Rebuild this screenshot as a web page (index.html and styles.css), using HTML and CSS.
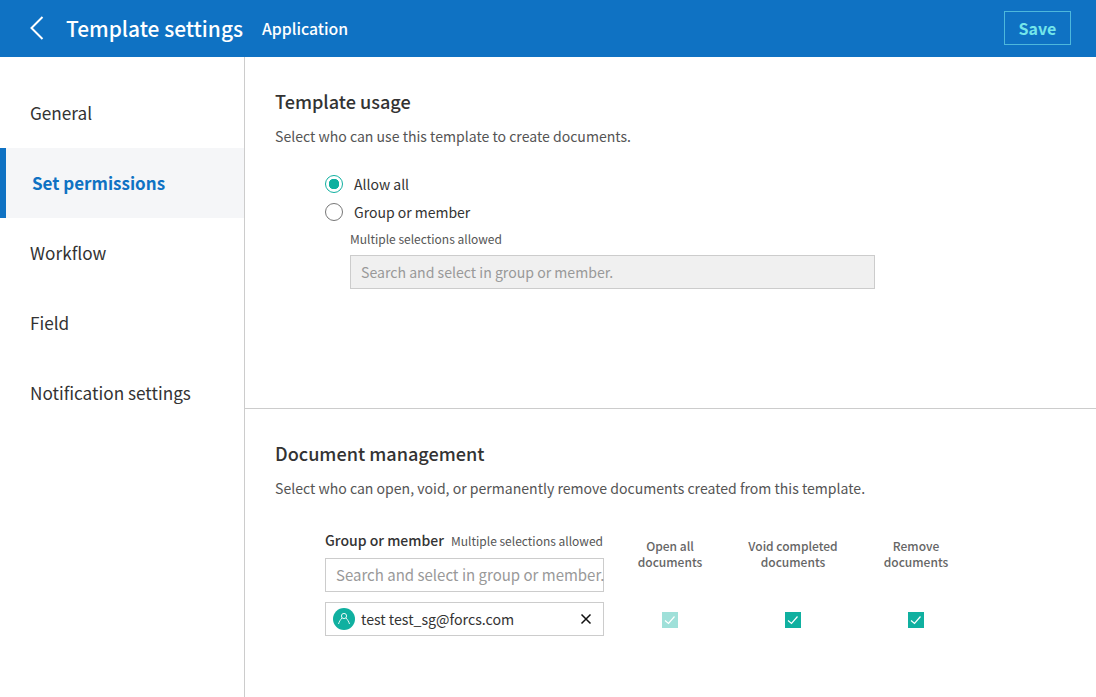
FILE: index.html
```html
<!DOCTYPE html>
<html lang="en">
<head>
    <meta charset="UTF-8">
    <meta name="viewport" content="width=device-width, initial-scale=1.0">
    <title>Template settings</title>
    <link rel="stylesheet" href="styles.css">
</head>
<body>
    <header class="topbar">
        <svg class="back" width="16" height="24" viewBox="0 0 16 24"><path d="M13.5 1 L2.5 12 L13.5 23" fill="none" stroke="#fff" stroke-width="2"/></svg>
        <span class="page-title">Template settings</span>
        <span class="page-sub">Application</span>
        <button class="save">Save</button>
    </header>

    <div class="layout">
        <nav class="sidebar">
            <a class="menu-item">General</a>
            <a class="menu-item active">Set permissions</a>
            <a class="menu-item">Workflow</a>
            <a class="menu-item">Field</a>
            <a class="menu-item">Notification settings</a>
        </nav>

        <main class="content">
            <section class="usage">
                <h2>Template usage</h2>
                <p class="desc">Select who can use this template to create documents.</p>

                <div class="radios">
                    <label class="radio-row"><span class="radio checked"></span>Allow all</label>
                    <label class="radio-row"><span class="radio"></span>Group or member</label>
                    <div class="radio-detail">
                        <small class="hint">Multiple selections allowed</small>
                        <div class="field disabled">Search and select in group or member.</div>
                    </div>
                </div>
            </section>

            <section class="management">
                <h2>Document management</h2>
                <p class="desc">Select who can open, void, or permanently remove documents created from this template.</p>

                <div class="perm-table">
                    <div class="perm-head">
                        <div class="perm-label"><b>Group or member</b><small class="hint">Multiple selections allowed</small></div>
                        <div class="field search">Search and select in group or member.</div>
                    </div>
                    <div class="perm-col">Open all<br>documents</div>
                    <div class="perm-col">Void completed<br>documents</div>
                    <div class="perm-col">Remove<br>documents</div>

                    <div class="member">
                        <span class="avatar">
                            <svg width="14" height="14" viewBox="0 0 14 14"><circle cx="7" cy="4" r="2.6" fill="none" stroke="#fff" stroke-width="0.9"/><path d="M1.5 12 C2.2 9.5 3.6 7.6 5 6 M12.5 12 C11.8 9.5 10.4 7.6 9 6" fill="none" stroke="#fff" stroke-width="0.9"/></svg>
                        </span>
                        <span class="member-name">test test_sg@forcs.com</span>
                        <svg class="remove" width="12" height="12" viewBox="0 0 12 12"><path d="M1.5 1.5 L10.5 10.5 M10.5 1.5 L1.5 10.5" stroke="#111" stroke-width="1.5"/></svg>
                    </div>
                    <div class="perm-check"><span class="check faded"><svg width="16" height="16" viewBox="0 0 16 16"><path d="M3 8.5 L6.5 11.5 L12.5 4.5" fill="none" stroke="#fff" stroke-width="1.2"/></svg></span></div>
                    <div class="perm-check"><span class="check"><svg width="16" height="16" viewBox="0 0 16 16"><path d="M3 8.5 L6.5 11.5 L12.5 4.5" fill="none" stroke="#fff" stroke-width="1.2"/></svg></span></div>
                    <div class="perm-check"><span class="check"><svg width="16" height="16" viewBox="0 0 16 16"><path d="M3 8.5 L6.5 11.5 L12.5 4.5" fill="none" stroke="#fff" stroke-width="1.2"/></svg></span></div>
                </div>
            </section>
        </main>
    </div>
</body>
</html>
```

FILE: styles.css
```css
* {
    box-sizing: border-box;
}

body {
    font-family: "Noto Sans CJK KR", "Noto Sans", sans-serif;
    margin: 0;
    color: #333;
    background-color: #fff;
    height: 697px;
    overflow: hidden;
}

/* Top bar */
.topbar {
    display: flex;
    align-items: center;
    height: 57px;
    padding: 0 25px 1px 29px;
    background-color: #0f72c3;
    color: #fff;
}

.back {
    margin-right: 21px;
}

.page-title {
    font-size: 20.9px;
    font-weight: 500;
    margin-right: 19px;
}

.page-sub {
    font-size: 15.8px;
    font-weight: 500;
}

.save {
    margin-left: auto;
    width: 67px;
    height: 34px;
    padding: 0;
    background: transparent;
    border: 1px solid #4db8dc;
    color: #74e6ea;
    font-family: inherit;
    font-size: 16px;
    font-weight: 700;
}

/* Sidebar */
.layout {
    display: flex;
    height: 640px;
}

.sidebar {
    width: 245px;
    padding-top: 21px;
    border-right: 1px solid #ccc;
}

.menu-item {
    display: flex;
    align-items: center;
    height: 70px;
    padding-left: 30px;
    padding-bottom: 2px;
    font-size: 17.2px;
    color: #333;
}

.menu-item.active {
    padding-left: 26px;
    border-left: 6px solid #0f72c3;
    background-color: #f5f6f8;
    color: #0f72c3;
    font-size: 17px;
    font-weight: 700;
}

/* Content */
.content {
    flex: 1;
}

.usage {
    height: 352px;
    padding: 31px 30px 0;
    border-bottom: 1px solid #ccc;
}

.management {
    padding: 31px 30px 0;
}

h2 {
    margin: 0;
    font-size: 18.1px;
    font-weight: 500;
    line-height: 26px;
    color: #333;
}

.desc {
    margin: 11px 0 0;
    font-size: 14.07px;
    line-height: 22px;
    color: #555;
}

.radios {
    margin: 23px 0 0 50px;
}

.radio-row {
    display: flex;
    align-items: center;
    height: 28px;
    font-size: 14px;
    color: #333;
}

.radio {
    width: 18px;
    height: 18px;
    margin-right: 11px;
    border: 1px solid #777;
    border-radius: 50%;
    background-color: #fff;
}

.radio.checked {
    border: 1.5px solid #10b0a0;
    background: radial-gradient(circle, #10b0a0 0, #10b0a0 5px, #fff 5.5px);
}

.hint {
    font-size: 12px;
    color: #555;
}

.radio-detail {
    margin-left: 25px;
}

.radio-detail .hint {
    display: block;
    line-height: 18px;
    margin: 4px 0 7px;
}

.field {
    display: flex;
    align-items: center;
    height: 34px;
    padding-left: 10px;
    border: 1px solid #ccc;
    font-size: 14.1px;
    color: #999;
}

.field.search {
    padding-bottom: 1px;
    font-size: 15px;
    white-space: nowrap;
}

.field.disabled {
    width: 525px;
    background-color: #f0f0f0;
}

/* Permission table */
.perm-table {
    display: grid;
    grid-template-columns: 279px repeat(3, 123px);
    margin: 29px 0 0 50px;
}

.perm-label {
    display: flex;
    align-items: center;
    justify-content: space-between;
    height: 24px;
    margin-bottom: 6px;
    padding-right: 1px;
    white-space: nowrap;
}

.perm-label b {
    font-size: 14px;
    font-weight: 500;
    color: #333;
}

.perm-col {
    padding: 10px 0 0 9px;
    text-align: center;
    font-size: 12px;
    font-weight: 500;
    line-height: 16px;
    color: #666;
}

.member {
    display: flex;
    align-items: center;
    height: 34px;
    margin-top: 10px;
    padding: 0 11px 0 7px;
    border: 1px solid #ccc;
}

.avatar {
    display: flex;
    align-items: center;
    justify-content: center;
    width: 22px;
    height: 22px;
    margin-right: 6px;
    border-radius: 50%;
    background-color: #10b0a0;
}

.member-name {
    flex: 1;
    font-size: 14.2px;
    color: #333;
}

.perm-check {
    display: flex;
    align-items: center;
    justify-content: center;
    padding: 1px 0 0 9px;
    margin-top: 10px;
}

.check {
    display: block;
    width: 16px;
    height: 16px;
    background-color: #10b0a0;
}

.check svg {
    display: block;
}

.check.faded {
    background-color: #9fe0d9;
}
```
